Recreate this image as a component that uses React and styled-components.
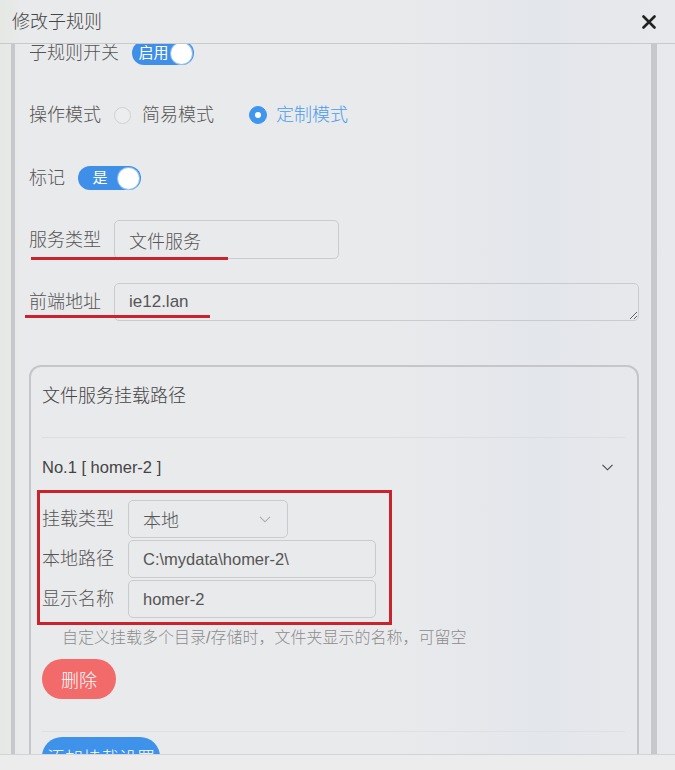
import React, { useEffect, useRef } from 'react';
import styled, { createGlobalStyle } from 'styled-components';

const GlobalStyle = createGlobalStyle`
  html, body {
    margin: 0;
    padding: 0;
  }
  body {
    background: #e9eaec;
    font-family: "Liberation Sans", "Noto Sans CJK SC", sans-serif;
    font-weight: 300;
    color: #555;
  }
`;

const Dialog = styled.div`
  width: 675px;
  height: 770px;
  display: flex;
  flex-direction: column;
  overflow: hidden;
  background: linear-gradient(90deg, #e5e8e3 0, #e9eaec 24px, #e9eaec 58%, #e3e6eb 80%, #e8e9ec 100%);
`;

const Header = styled.div`
  height: 44px;
  box-sizing: border-box;
  border-bottom: 1px solid #c8c9cb;
  padding: 0 19px 0 12px;
  display: flex;
  align-items: center;
  justify-content: space-between;
  flex-shrink: 0;
`;

const Title = styled.div`
  font-size: 18px;
  line-height: 24px;
  color: #444;
`;

const Close = styled.button`
  border: none;
  background: none;
  padding: 0;
  width: 14px;
  height: 14px;
  display: flex;
  cursor: pointer;
`;

// 스크롤 영역
const Body = styled.div`
  flex: 1;
  margin-left: 11px;
  width: 646px;
  box-sizing: border-box;
  border-left: 4px solid #c6c8cb;
  border-right: 6px solid #c6c8cb;
  overflow: hidden;
`;

const Form = styled.div`
  padding: 17px 12px 60px 14px;
  display: flex;
  flex-direction: column;
`;

const Row = styled.div`
  display: flex;
  align-items: center;
  height: ${p => p.$h}px;
  margin-top: ${p => p.$mt || 0}px;
`;

const Label = styled.span`
  position: relative;
  font-size: 18px;
  line-height: 24px;
  color: #555;
  margin-right: 13px;
  white-space: nowrap;
`;

const Underline = styled.i`
  position: absolute;
  left: ${p => p.$left}px;
  top: calc(100% + ${p => p.$top}px);
  width: ${p => p.$w}px;
  height: 3px;
  background: #c9232e;
`;

const Toggle = styled.div`
  width: ${p => p.$w}px;
  height: 24px;
  box-sizing: border-box;
  border-radius: 12px;
  background: #3f8fe8;
  display: flex;
  align-items: center;
  padding: 0 2px 0 4px;
  span {
    flex: 1;
    text-align: center;
    color: #fff;
    font-size: 15px;
    font-weight: 400;
    line-height: 20px;
  }
  &::after {
    content: '';
    width: 21px;
    height: 21px;
    border-radius: 50%;
    background: #fff;
    box-shadow: 0 0 0 1px #8fc0f2;
  }
`;

const Radio = styled.span`
  width: ${p => (p.$checked ? 18 : 17)}px;
  height: ${p => (p.$checked ? 18 : 17)}px;
  box-sizing: border-box;
  border-radius: 50%;
  border: 1px solid ${p => (p.$checked ? '#4096ee' : '#cfd0d2')};
  background: ${p => (p.$checked ? '#4096ee' : '#ecedef')};
  display: flex;
  align-items: center;
  justify-content: center;
  margin-right: ${p => (p.$checked ? 9 : 11)}px;
  &::after {
    content: '';
    display: ${p => (p.$checked ? 'block' : 'none')};
    width: 6px;
    height: 6px;
    border-radius: 50%;
    background: #fff;
  }
`;

const RadioText = styled.span`
  font-size: 18px;
  line-height: 24px;
  color: ${p => (p.$active ? '#4a9bec' : '#555')};
  margin-right: ${p => p.$mr || 0}px;
`;

const Input = styled.input`
  width: ${p => p.$w}px;
  height: ${p => p.$h || 38}px;
  box-sizing: border-box;
  border: 1px solid #c9cbce;
  border-radius: 5px;
  background: transparent;
  padding: 0 14px;
  font-family: inherit;
  font-weight: 300;
  font-size: ${p => (p.$latin ? 16.5 : 18)}px;
  color: #555;
  outline: none;
`;

const TextArea = styled.textarea`
  flex: 1;
  height: 38px;
  box-sizing: border-box;
  border: 1px solid #c9cbce;
  border-radius: 5px;
  background: transparent;
  padding: 7px 14px;
  font-family: inherit;
  font-weight: 300;
  font-size: 17px;
  line-height: 22px;
  color: #555;
  resize: vertical;
  outline: none;
`;

const Card = styled.div`
  margin-top: 44px;
  border: 2px solid #c4c6c9;
  border-radius: 12px;
  display: flex;
  flex-direction: column;
  padding-bottom: 40px;
`;

const CardTitle = styled.div`
  padding: 17px 11px 29px;
  font-size: 18px;
  line-height: 24px;
  color: #444;
`;

const Collapse = styled.div`
  margin: 0 12px 0 11px;
  border-top: 1px solid #dcdde0;
  border-bottom: 1px solid #dfe0e2;
  padding-bottom: 32px;
  display: flex;
  flex-direction: column;
`;

const CollapseHead = styled.div`
  display: flex;
  align-items: center;
  justify-content: space-between;
  padding: 17px 0 11px;
  font-size: 16.5px;
  line-height: 24px;
  color: #444;
  svg {
    margin-right: 12px;
  }
`;

const Marked = styled.div`
  margin-left: -5px;
  width: 355px;
  box-sizing: border-box;
  border: 3px solid #c9232e;
  padding: 7px 0 4px 2px;
  display: flex;
  flex-direction: column;
  gap: 2px;
`;

const Field = styled.div`
  display: flex;
  align-items: center;
  height: 38px;
`;

const FieldLabel = styled.span`
  width: 86px;
  font-size: 18px;
  line-height: 24px;
  color: #555;
`;

const Select = styled.div`
  width: 160px;
  height: 38px;
  box-sizing: border-box;
  border: 1px solid #c9cbce;
  border-radius: 5px;
  padding: 0 16px 0 14px;
  display: flex;
  align-items: center;
  justify-content: space-between;
  font-size: 18px;
  color: #555;
`;

const Hint = styled.div`
  margin-top: 2px;
  padding-left: 20px;
  font-size: 16px;
  line-height: 22px;
  color: #8c8c8c;
`;

const PillButton = styled.button`
  align-self: flex-start;
  margin-top: ${p => p.$mt}px;
  margin-left: ${p => p.$ml || 0}px;
  width: ${p => p.$w}px;
  height: 40px;
  border: none;
  border-radius: 20px;
  background: ${p => p.$bg};
  color: #fff;
  font-family: inherit;
  font-weight: 300;
  font-size: 18px;
  padding: 0;
  flex-shrink: 0;
`;

const Footer = styled.div`
  height: 16px;
  box-sizing: border-box;
  border-top: 1px solid #d2d3d5;
  background: #ececed;
  flex-shrink: 0;
`;

const Chevron = ({ color = '#444', w = 11 }) => (
  <svg width={w} height="7" viewBox="0 0 11 7">
    <polyline points="0.5,0.8 5.5,5.8 10.5,0.8" fill="none" stroke={color} strokeWidth="1.1" />
  </svg>
);

export default function App() {
  const bodyRef = useRef(null);

  useEffect(() => {
    if (bodyRef.current) bodyRef.current.scrollTop = 20;
  }, []);

  return (
    <>
      <GlobalStyle />
      <Dialog>
        <Header>
          <Title>修改子规则</Title>
          <Close aria-label="close">
            <svg width="14" height="14" viewBox="0 0 14 14">
              <path d="M1.5 1.5 L12.5 12.5 M12.5 1.5 L1.5 12.5" stroke="#222" strokeWidth="2.6" strokeLinecap="round" />
            </svg>
          </Close>
        </Header>

        <Body ref={bodyRef}>
          <Form>
            <Row $h={24}>
              <Label>子规则开关</Label>
              <Toggle $w={62}><span>启用</span></Toggle>
            </Row>

            <Row $h={24} $mt={38}>
              <Label>操作模式</Label>
              <Radio />
              <RadioText $mr={35}>简易模式</RadioText>
              <Radio $checked />
              <RadioText $active>定制模式</RadioText>
            </Row>

            <Row $h={24} $mt={39}>
              <Label>标记</Label>
              <Toggle $w={63}><span>是</span></Toggle>
            </Row>

            <Row $h={39} $mt={30}>
              <Label>
                服务类型
                <Underline $left={2} $top={5} $w={197} />
              </Label>
              <Input $w={225} $h={39} readOnly value="文件服务" />
            </Row>

            <Row $h={38} $mt={24}>
              <Label>
                前端地址
                <Underline $left={-4} $top={1} $w={185} />
              </Label>
              <TextArea readOnly value="ie12.lan" />
            </Row>

            <Card>
              <CardTitle>文件服务挂载路径</CardTitle>
              <Collapse>
                <CollapseHead>
                  <span>No.1 [ homer-2 ]</span>
                  <Chevron />
                </CollapseHead>
                <Marked>
                  <Field>
                    <FieldLabel>挂载类型</FieldLabel>
                    <Select>
                      <span>本地</span>
                      <Chevron color="#aaa" w={12} />
                    </Select>
                  </Field>
                  <Field>
                    <FieldLabel>本地路径</FieldLabel>
                    <Input $w={248} $latin readOnly value={'C:\\mydata\\homer-2\\'} />
                  </Field>
                  <Field>
                    <FieldLabel>显示名称</FieldLabel>
                    <Input $w={248} $latin readOnly value="homer-2" />
                  </Field>
                </Marked>
                <Hint>自定义挂载多个目录/存储时，文件夹显示的名称，可留空</Hint>
                <PillButton $mt={10} $w={74} $bg="#f26a6a">删除</PillButton>
              </Collapse>
              <PillButton $mt={5} $ml={11} $w={118} $bg="#3f92ea">添加挂载设置</PillButton>
            </Card>
          </Form>
        </Body>

        <Footer />
      </Dialog>
    </>
  );
}
